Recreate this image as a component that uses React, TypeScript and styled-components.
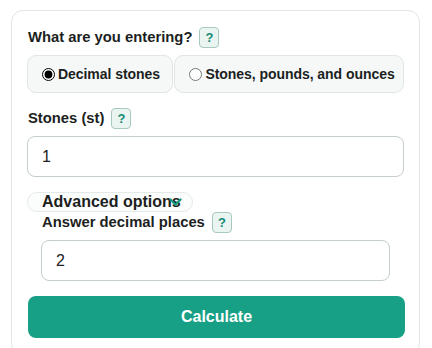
import React from 'react'
import styled, { createGlobalStyle } from 'styled-components'

const GlobalStyle = createGlobalStyle`
  body {
    margin: 0;
    background: #ffffff;
    font-family: "Liberation Sans", Arial, sans-serif;
    color: #1c1f1e;
  }
`

const Page = styled.div`
  padding: 10px 0 0 11px;
`

const Card = styled.div`
  box-sizing: border-box;
  width: 409px;
  border: 1px solid #dfe6e4;
  border-radius: 12px;
  background: #ffffff;
  padding: 16px 15px 16px 15px;
  display: flex;
  flex-direction: column;
`

const Field = styled.div<{ $spaced?: boolean }>`
  display: flex;
  flex-direction: column;
  gap: 7px;
  margin-bottom: ${({ $spaced }) => ($spaced ? '15px' : '0')};
`

const LabelRow = styled.div`
  display: flex;
  align-items: center;
  gap: 7px;
  height: 21px;
`

const LabelText = styled.label`
  font-size: 14.8px;
  font-weight: 700;
  line-height: 21px;
  padding-left: 1px;
`

const HelpBadge = styled.span`
  box-sizing: border-box;
  width: 20px;
  height: 21px;
  display: inline-flex;
  align-items: center;
  justify-content: center;
  border: 1px solid #a9c8c0;
  border-radius: 4px;
  background: #eaf5f2;
  color: #168a77;
  font-size: 13px;
  font-weight: 700;
`

const RadioGroup = styled.div`
  display: flex;
  gap: 1px;
`

const RadioOption = styled.label<{ $tight?: boolean }>`
  flex: 1 1 auto;
  box-sizing: border-box;
  height: 38px;
  display: flex;
  align-items: center;
  padding: ${({ $tight }) => ($tight ? '0 6px 0 10px' : '0 10px')};
  border: 1px solid #dfe6e4;
  border-radius: 9px;
  background: #f5f8f7;
  font-size: 14px;
  font-weight: 700;
  white-space: nowrap;
  letter-spacing: -0.05px;
  cursor: pointer;

  input {
    margin: 0 3px 0 4px;
    width: 13px;
    height: 13px;
    accent-color: #000000;
  }
`

const TextInput = styled.input`
  box-sizing: border-box;
  width: 100%;
  height: 41px;
  border: 1px solid #c5cecc;
  border-radius: 8px;
  padding: 0 14px;
  font-family: "Liberation Sans", Arial, sans-serif;
  font-size: 16px;
  color: #222222;
  background: #ffffff;
  outline: none;
`

const Advanced = styled.details`
  margin-bottom: 15px;
`

const Summary = styled.summary`
  position: relative;
  box-sizing: border-box;
  width: fit-content;
  height: 20px;
  display: flex;
  align-items: center;
  padding: 0 11px 0 14px;
  border: 1px solid #e4eae8;
  border-radius: 10px;
  background: #fbfdfc;
  font-size: 16px;
  font-weight: 700;
  list-style: none;
  cursor: pointer;

  &::-webkit-details-marker {
    display: none;
  }
`

const Chevron = styled.svg`
  position: absolute;
  right: 10px;
  top: 5px;
`

const AdvancedBody = styled.div`
  padding: 0 14px;
`

const CalcButton = styled.button`
  box-sizing: border-box;
  width: 100%;
  height: 42px;
  margin-left: 1px;
  border: none;
  border-radius: 8px;
  background: #17a085;
  color: #ffffff;
  font-family: "Liberation Sans", Arial, sans-serif;
  font-size: 16px;
  font-weight: 700;
  cursor: pointer;
`

const Label = ({ children }: { children: React.ReactNode }) => (
  <LabelRow>
    <LabelText>{children}</LabelText>
    <HelpBadge>?</HelpBadge>
  </LabelRow>
)

export default function App() {
  const [mode, setMode] = React.useState('decimal')
  const [stones, setStones] = React.useState('1')
  const [places, setPlaces] = React.useState('2')

  return (
    <Page>
      <GlobalStyle />
      <Card>
        <Field $spaced>
          <Label>What are you entering?</Label>
          <RadioGroup>
            <RadioOption>
              <input
                type="radio"
                name="mode"
                checked={mode === 'decimal'}
                onChange={() => setMode('decimal')}
              />
              Decimal stones
            </RadioOption>
            <RadioOption $tight>
              <input
                type="radio"
                name="mode"
                checked={mode === 'spo'}
                onChange={() => setMode('spo')}
              />
              Stones, pounds, and ounces
            </RadioOption>
          </RadioGroup>
        </Field>

        <Field $spaced>
          <Label>Stones (st)</Label>
          <TextInput value={stones} onChange={(e) => setStones(e.target.value)} />
        </Field>

        <Advanced open>
          <Summary>
            Advanced options
            <Chevron width="13" height="9" viewBox="0 0 13 9">
              <path d="M1.5 1.5 L6.5 6.8 L11.5 1.5" fill="none" stroke="#1a9a80" strokeWidth="2.4" strokeLinecap="round" strokeLinejoin="round" />
            </Chevron>
          </Summary>
          <AdvancedBody>
            <Field>
              <Label>Answer decimal places</Label>
              <TextInput value={places} onChange={(e) => setPlaces(e.target.value)} />
            </Field>
          </AdvancedBody>
        </Advanced>

        <CalcButton>Calculate</CalcButton>
      </Card>
    </Page>
  )
}
